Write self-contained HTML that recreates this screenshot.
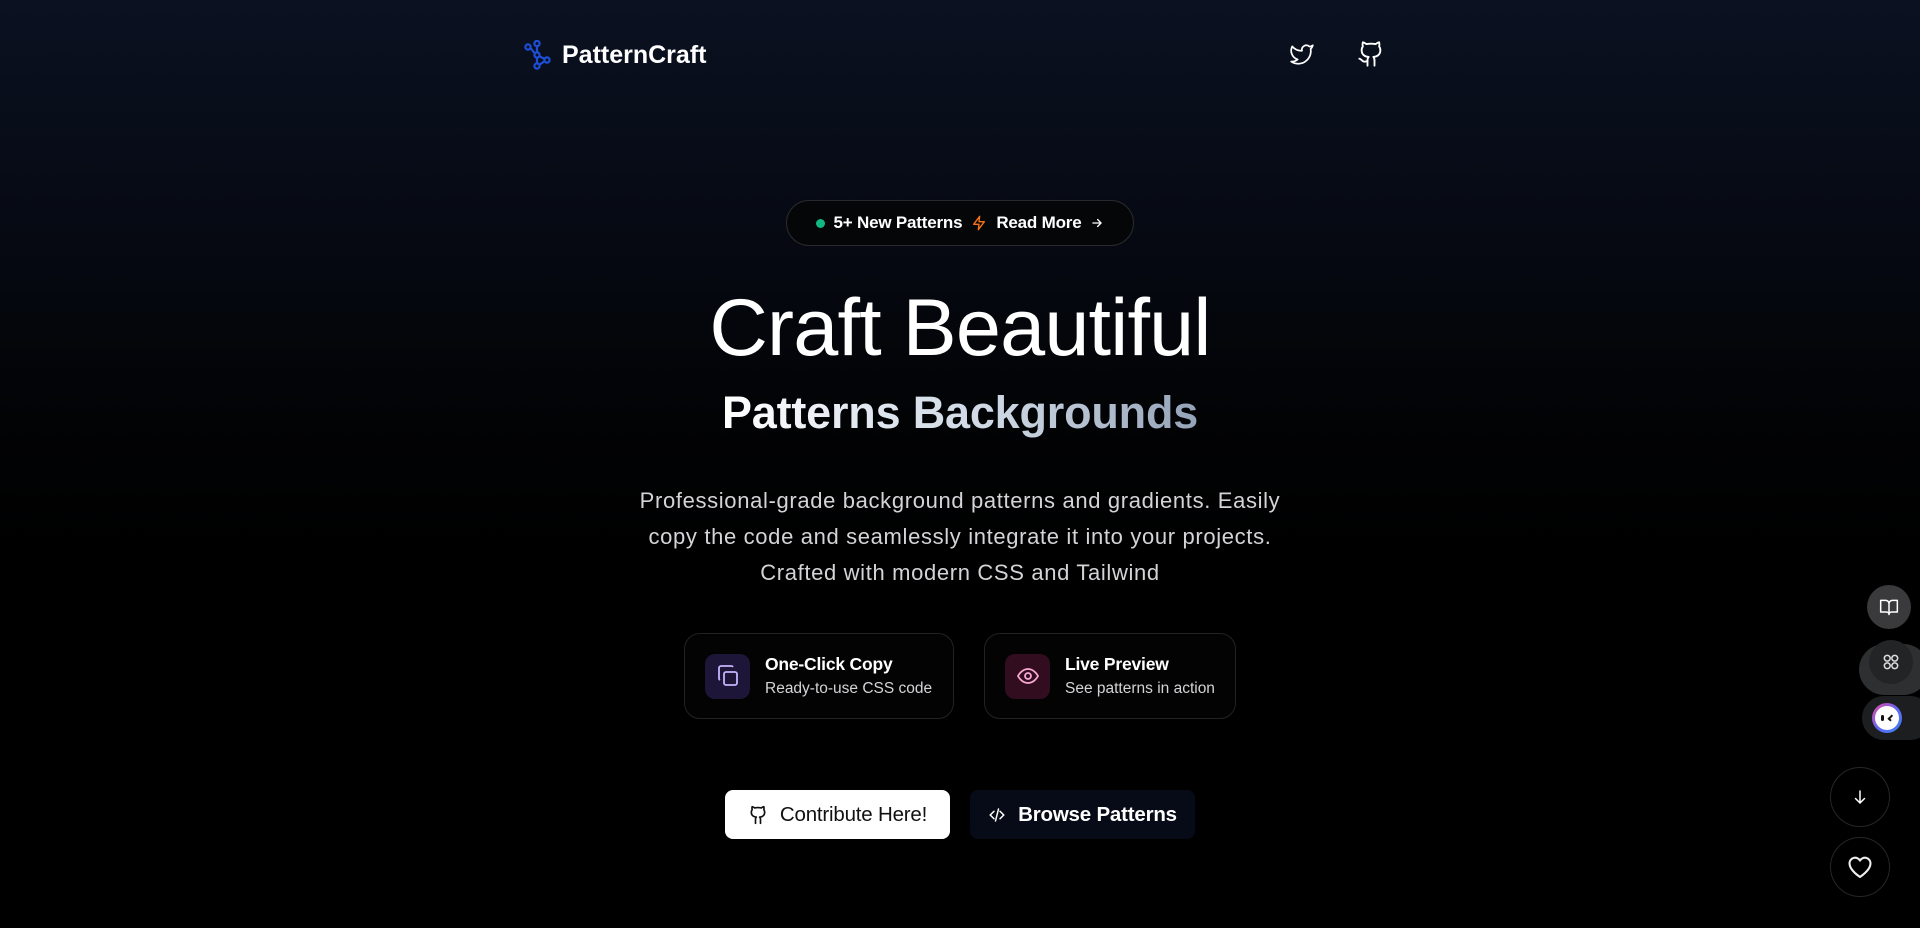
<!DOCTYPE html>
<html><head><meta charset="utf-8"><style>
*{margin:0;padding:0;box-sizing:border-box}
html,body{width:1920px;height:928px;overflow:hidden}
body{background:linear-gradient(180deg,#0b1121 0%,#070b16 20%,#020305 45%,#000 60%,#000 100%);font-family:"Liberation Sans",sans-serif;color:#fff;position:relative}
.abs{position:absolute}
.logo{left:524px;top:40px;display:flex;align-items:center;gap:10px}
.logo span{font-size:25px;font-weight:bold;letter-spacing:0}
.pill{left:786px;top:200px;width:348px;height:46px;border:1px solid #2a2a2e;border-radius:23px;display:flex;align-items:center;justify-content:center;gap:9px;font-size:17px;font-weight:bold;letter-spacing:-0.2px;background:#050608}
.dot{width:9px;height:9px;border-radius:50%;background:#10b981}
h1{position:absolute;left:0;width:1920px;top:283px;text-align:center;font-size:81px;font-weight:normal;letter-spacing:-0.8px;line-height:90px}
h2{position:absolute;left:0;width:1920px;top:385px;text-align:center;font-size:45px;font-weight:bold;letter-spacing:-0.2px;line-height:56px}
h2 span{background:linear-gradient(90deg,#fff 0%,#e2e8f0 30%,#cbd5e1 60%,#94a3b8 100%);-webkit-background-clip:text;background-clip:text;color:transparent}
p.d{position:absolute;left:0;width:1920px;top:483px;text-align:center;font-size:22px;line-height:36px;color:#d4d4d8;letter-spacing:0.65px}
.card{top:633px;height:86px;border:1px solid #222226;border-radius:16px;display:flex;align-items:center;padding-left:20px;gap:15px;background:#030303}
.ib{width:45px;height:45px;border-radius:10px;display:flex;align-items:center;justify-content:center}
.card b{display:block;font-size:17.5px;letter-spacing:-0.2px}
.card small{display:block;font-size:15.5px;color:#d4d4d8;margin-top:5px}
.btn{top:790px;height:49px;width:225px;border-radius:8px;display:flex;align-items:center;justify-content:center;gap:12px;font-size:20.5px;letter-spacing:-0.2px}
.circ{border-radius:50%;display:flex;align-items:center;justify-content:center}
</style></head><body>
<div class="abs logo">
<svg width="28" height="30" viewBox="0 0 28 30" fill="none" stroke="#1d4ed8" stroke-width="2.2"><circle cx="4" cy="7" r="2.6"/><circle cx="13" cy="3.5" r="2.6"/><circle cx="13" cy="15" r="2.6"/><circle cx="23" cy="20" r="2.6"/><circle cx="13" cy="26" r="2.6"/><path d="M6.5 8l4 5M13 6v6.5M15.3 16.2l5.4 2.8M13 17.6v5.8M20.6 21.2l-5.3 3.6"/></svg>
<span>PatternCraft</span></div>
<svg class="abs" style="left:1288px;top:41px" width="28" height="26" viewBox="0 0 24 24" fill="none" stroke="#fff" stroke-width="1.6" stroke-linejoin="round"><path d="M22 4s-.7 2.1-2 3.4c1.6 10-9.4 17.3-18 11.6 2.2.1 4.4-.6 6-2C3 15.5.5 9.6 3 5c2.2 2.6 5.6 4.1 9 4-.9-4.2 4-6.6 7-3.8 1.1 0 3-1.2 3-1.2z"/></svg>
<svg class="abs" style="left:1357px;top:40px" width="28" height="28" viewBox="0 0 24 24" fill="none" stroke="#fff" stroke-width="1.6" stroke-linecap="round" stroke-linejoin="round"><path d="M15 22v-4a4.8 4.8 0 0 0-1-3.5c3 0 6-2 6-5.5.08-1.25-.27-2.48-1-3.5.28-1.15.28-2.35 0-3.5 0 0-1 0-3 1.5-2.64-.5-5.36-.5-8 0C6 2 5 2 5 2c-.3 1.15-.3 2.35 0 3.5A5.4 5.4 0 0 0 4 9c0 3.5 3 5.5 6 5.5-.39.49-.68 1.05-.85 1.65-.17.6-.22 1.23-.15 1.85v4"/><path d="M9 18c-4.51 2-5-2-7-2"/></svg>

<div class="abs pill"><div class="dot"></div><span>5+ New Patterns</span>
<svg width="16" height="18" viewBox="0 0 24 24" fill="none" stroke="#f97316" stroke-width="2" stroke-linejoin="round"><path d="M13 2L4 14h8l-1 8 9-12h-8z"/></svg>
<span>Read More</span>
<svg width="14" height="14" viewBox="0 0 24 24" fill="none" stroke="#fff" stroke-width="2.2" stroke-linecap="round"><path d="M5 12h14M13 6l6 6-6 6"/></svg></div>

<h1>Craft Beautiful</h1>
<h2><span>Patterns Backgrounds</span></h2>
<p class="d">Professional-grade background patterns and gradients. Easily<br>copy the code and seamlessly integrate it into your projects.<br>Crafted with modern CSS and Tailwind</p>

<div class="abs card" style="left:684px;width:270px">
<div class="ib" style="background:#1e1638"><svg width="24" height="24" viewBox="0 0 24 24" fill="none" stroke="#c4b5fd" stroke-width="1.8" stroke-linejoin="round"><rect x="8" y="8" width="13" height="13" rx="2"/><path d="M4 16a2 2 0 0 1-1-2V4a2 2 0 0 1 2-2h10a2 2 0 0 1 2 1"/></svg></div>
<div><b>One-Click Copy</b><small>Ready-to-use CSS code</small></div></div>
<div class="abs card" style="left:984px;width:252px">
<div class="ib" style="background:#320d20"><svg width="24" height="24" viewBox="0 0 24 24" fill="none" stroke="#f9a8d4" stroke-width="1.8"><path d="M2 12s3.5-7 10-7 10 7 10 7-3.5 7-10 7S2 12 2 12z"/><circle cx="12" cy="12" r="3"/></svg></div>
<div><b>Live Preview</b><small>See patterns in action</small></div></div>

<div class="abs btn" style="left:725px;background:#fff;color:#111">
<svg width="20" height="20" viewBox="0 0 24 24" fill="none" stroke="#111" stroke-width="2" stroke-linecap="round" stroke-linejoin="round"><path d="M15 22v-4a4.8 4.8 0 0 0-1-3.5c3 0 6-2 6-5.5.08-1.25-.27-2.48-1-3.5.28-1.15.28-2.35 0-3.5 0 0-1 0-3 1.5-2.64-.5-5.36-.5-8 0C6 2 5 2 5 2c-.3 1.15-.3 2.35 0 3.5A5.4 5.4 0 0 0 4 9c0 3.5 3 5.5 6 5.5-.39.49-.68 1.05-.85 1.65-.17.6-.22 1.23-.15 1.85v4"/></svg>
<span>Contribute Here!</span></div>
<div class="abs btn" style="left:970px;background:#070b18;color:#fff;font-weight:bold">
<svg width="18" height="18" viewBox="0 0 24 24" fill="none" stroke="#fff" stroke-width="2" stroke-linecap="round"><path d="M8 7l-5 5 5 5M16 7l5 5-5 5M14 4l-4 16"/></svg>
<span>Browse Patterns</span></div>

<div class="abs circ" style="left:1867px;top:585px;width:44px;height:44px;background:#3a3a3c"><svg width="20" height="20" viewBox="0 0 24 24" fill="none" stroke="#fff" stroke-width="1.8" stroke-linejoin="round"><path d="M2 4h6a4 4 0 0 1 4 4v13a3 3 0 0 0-3-3H2zM22 4h-6a4 4 0 0 0-4 4v13a3 3 0 0 1 3-3h7z"/></svg></div>
<div class="abs" style="left:1859px;top:644px;width:70px;height:51px;border-radius:26px;background:#2e2f31"></div>
<div class="abs circ" style="left:1869px;top:640px;width:44px;height:44px;background:#232426"><svg width="20" height="20" viewBox="0 0 24 24" fill="none" stroke="#ddd" stroke-width="1.8"><circle cx="7.5" cy="7.5" r="3.5"/><circle cx="16.5" cy="7.5" r="3.5"/><circle cx="7.5" cy="16.5" r="3.5"/><circle cx="16.5" cy="16.5" r="3.5"/></svg></div>
<div class="abs" style="left:1862px;top:696px;width:70px;height:44px;border-radius:22px;background:#1d1e20"></div>
<div class="abs circ" style="left:1872px;top:703px;width:30px;height:30px;background:linear-gradient(135deg,#ec4899,#6366f1,#3b82f6)"><div class="circ" style="width:24px;height:24px;background:#fff;gap:5px"><div style="width:3px;height:6px;background:#111;border-radius:2px"></div><div style="width:4px;height:6px;border-left:2px solid #111;border-bottom:2px solid #111;transform:rotate(45deg)"></div></div></div>

<div class="abs circ" style="left:1830px;top:767px;width:60px;height:60px;border:1px solid #262628;background:#000"><svg width="18" height="18" viewBox="0 0 24 24" fill="none" stroke="#fff" stroke-width="2" stroke-linecap="round"><path d="M12 4v16M6 14l6 6 6-6"/></svg></div>
<div class="abs circ" style="left:1830px;top:837px;width:60px;height:60px;border:1px solid #262628;background:#000"><svg width="28" height="28" viewBox="0 0 24 24" fill="none" stroke="#eee" stroke-width="1.8" stroke-linejoin="round"><path d="M12 20.5S3 15 3 8.8A4.8 4.8 0 0 1 12 6.5a4.8 4.8 0 0 1 9 2.3C21 15 12 20.5 12 20.5z"/></svg></div>
</body></html>
